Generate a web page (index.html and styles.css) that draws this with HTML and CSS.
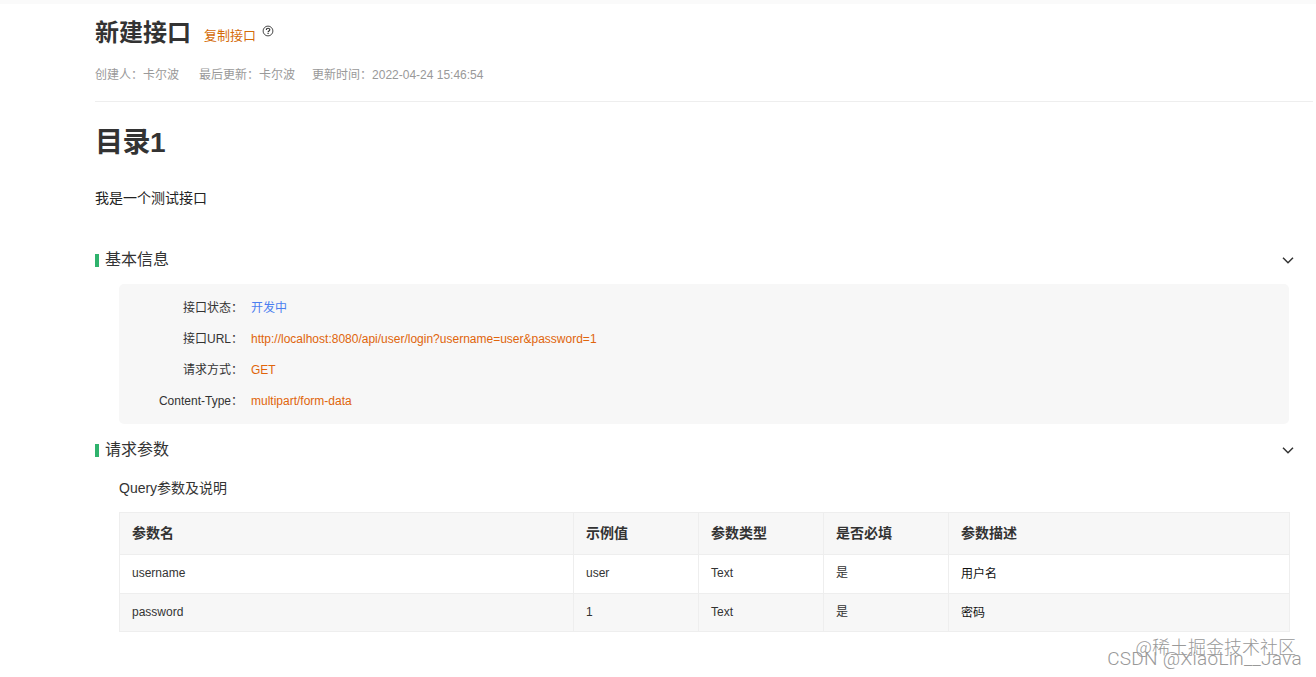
FILE: index.html
```html
<!DOCTYPE html>
<html lang="zh-CN">

<head>
    <meta charset="UTF-8">
    <meta name="viewport" content="width=device-width, initial-scale=1.0">
    <title>新建接口</title>
    <link rel="stylesheet" href="styles.css">
</head>

<body>
    <div class="topbar"></div>

    <div class="page">
        <header class="header">
            <div class="title-row">
                <h2 class="title">新建接口</h2>
                <a class="copy">复制接口</a>
                <svg class="help" width="12" height="12" viewBox="0 0 12 12" fill="none" stroke="#333">
                    <circle cx="6" cy="6" r="4.9" stroke-width="0.9" />
                    <path d="M4.3 4.9C4.3 2.7 7.8 2.8 7.8 4.7C7.8 5.9 6.1 5.9 6.1 7.2" stroke-width="1.2" />
                    <path d="M6.1 8V9.1" stroke-width="1.2" />
                </svg>
            </div>
            <div class="meta">
                <span class="creator">创建人：卡尔波</span>
                <span class="updater">最后更新：卡尔波</span>
                <span>更新时间：2022-04-24 15:46:54</span>
            </div>
        </header>

        <h1 class="catalog">目录1</h1>
        <p class="desc">我是一个测试接口</p>

        <div class="section-title">
            <span class="bar"></span>
            <span class="section-name">基本信息</span>
            <svg class="arrow" width="12" height="8" viewBox="0 0 12 8" fill="none" stroke="#333" stroke-width="1.5">
                <path d="M1 1.7L6 6.7L11 1.7" />
            </svg>
        </div>
        <div class="info">
            <div class="info-row"><span class="label">接口状态：</span><span class="value status">开发中</span></div>
            <div class="info-row"><span class="label">接口URL：</span><span class="value">http://localhost:8080/api/user/login?username=user&amp;password=1</span></div>
            <div class="info-row"><span class="label">请求方式：</span><span class="value">GET</span></div>
            <div class="info-row"><span class="label">Content-Type：</span><span class="value">multipart/form-data</span></div>
        </div>

        <div class="section-title second">
            <span class="bar"></span>
            <span class="section-name">请求参数</span>
            <svg class="arrow" width="12" height="8" viewBox="0 0 12 8" fill="none" stroke="#333" stroke-width="1.5">
                <path d="M1 1.7L6 6.7L11 1.7" />
            </svg>
        </div>
        <div class="sub-title">Query参数及说明</div>
        <table class="params">
            <colgroup>
                <col class="col-name">
                <col class="col-small">
                <col class="col-small">
                <col class="col-small">
                <col>
            </colgroup>
            <thead>
                <tr>
                    <th>参数名</th>
                    <th>示例值</th>
                    <th>参数类型</th>
                    <th>是否必填</th>
                    <th>参数描述</th>
                </tr>
            </thead>
            <tbody>
                <tr>
                    <td>username</td>
                    <td>user</td>
                    <td>Text</td>
                    <td>是</td>
                    <td class="dark">用户名</td>
                </tr>
                <tr>
                    <td>password</td>
                    <td>1</td>
                    <td>Text</td>
                    <td>是</td>
                    <td class="dark">密码</td>
                </tr>
            </tbody>
        </table>
    </div>

    <div class="watermark juejin">@稀土掘金技术社区</div>
    <div class="watermark csdn">CSDN @XiaoLin__Java</div>
</body>

</html>
```
FILE: styles.css
```css
* {
    box-sizing: border-box;
}

body {
    margin: 0;
    height: 677px;
    overflow: hidden;
    position: relative;
    background: #fff;
    color: #333;
    font-family: "Liberation Sans", "Noto Sans CJK SC", sans-serif;
    font-size: 12px;
}

h1,
h2,
p {
    margin: 0;
}

.topbar {
    height: 4px;
    background: #fafafa;
}

.page {
    padding-left: 95px;
}

.header {
    height: 98px;
    padding-top: 9px;
    margin-right: 3px;
    border-bottom: 1px solid #eee;
}

.title-row {
    display: flex;
    height: 40px;
}

.title {
    font-size: 24px;
    line-height: 40px;
}

.copy {
    margin-left: 13px;
    padding-top: 3px;
    font-size: 13px;
    line-height: 40px;
    color: #d46b08;
}

.help {
    margin: 12px 0 0 6px;
}

.meta {
    display: flex;
    margin-top: 12px;
    line-height: 20px;
    color: #999;
}

.creator {
    margin-right: 20px;
}

.updater {
    margin-right: 17px;
}

.catalog {
    margin-top: 21px;
    font-size: 28px;
    line-height: 40px;
    letter-spacing: -0.5px;
}

.desc {
    margin-top: 25px;
    font-size: 14px;
    line-height: 20px;
    color: #222;
}

.section-title {
    display: flex;
    align-items: center;
    height: 24px;
    margin-top: 40px;
    padding-right: 22px;
}

.section-title.second {
    margin-top: 14px;
}

.bar {
    width: 4px;
    height: 13px;
    margin-right: 6px;
    background: #2fb36d;
}

.section-name {
    font-size: 16px;
    line-height: 24px;
}

.arrow {
    margin-left: auto;
}

.info {
    height: 140px;
    margin: 12px 27px 0 24px;
    padding-top: 9px;
    background: #f7f7f7;
    border-radius: 5px;
}

.info-row {
    display: flex;
    height: 31px;
    line-height: 31px;
}

.label {
    width: 124px;
    text-align: right;
}

.value {
    margin-left: 8px;
    color: #e0650b;
}

.value.status {
    color: #4c7ff0;
}

.sub-title {
    margin: 16px 0 0 24px;
    font-size: 14px;
    line-height: 20px;
}

.params {
    width: 1171px;
    margin: 14px 0 0 24px;
    table-layout: fixed;
    border-collapse: collapse;
}

.col-name {
    width: 454px;
}

.col-small {
    width: 125px;
}

.params th,
.params td {
    height: 39px;
    padding: 0 12px 2px;
    border: 1px solid #eee;
    text-align: left;
    line-height: 20px;
}

.params th {
    height: 42px;
    font-size: 14px;
    background: #f7f7f7;
}

.params tbody tr:nth-child(even) {
    background: #f7f7f7;
}

.params tbody tr:nth-child(even) td {
    height: 38px;
    padding-bottom: 1px;
}

.params tbody td.dark,
.params tbody tr:nth-child(even) td.dark {
    padding-bottom: 0;
    color: #111;
}

/* watermarks lie over the bottom right corner */
.watermark {
    position: absolute;
    white-space: nowrap;
    line-height: 24px;
    color: #999;
}

.juejin {
    right: 20px;
    bottom: 19px;
    font-family: "Noto Sans CJK SC", sans-serif;
    font-size: 18px;
    font-weight: 300;
    text-shadow: 1px 1px 1px #fff;
}

.csdn {
    right: 14px;
    bottom: 6px;
    font-family: Roboto, sans-serif;
    font-size: 19px;
    font-weight: 300;
    letter-spacing: 0.3px;
}
```
